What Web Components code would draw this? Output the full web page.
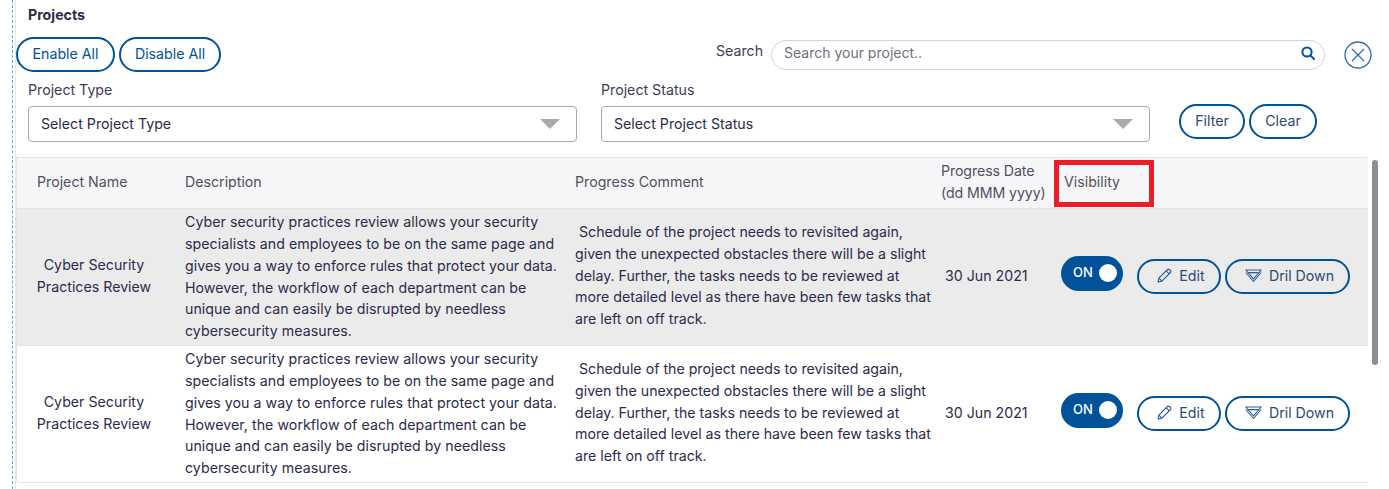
<!DOCTYPE html>
<html lang="en">
<head>
<meta charset="utf-8">
<title>Projects</title>
<style>
  html, body { margin: 0; height: 489px; overflow: hidden; background: #fff; }
  body { font-family: Inter, "Liberation Sans", sans-serif; font-size: 14.2px; color: #2b2b4b; }
</style>
</head>
<body>
<projects-page></projects-page>

<script>
class PillButton extends HTMLElement {
  constructor() {
    super();
    this.attachShadow({ mode: 'open' });
    this.shadowRoot.innerHTML = `
      <style>
        :host { display: inline-block; }
        button {
            display: flex;
            align-items: center;
            justify-content: center;
            gap: var(--pill-gap, 8px);
            box-sizing: border-box;
            height: var(--pill-height, 35px);
            width: var(--pill-width, auto);
            padding: 0 0 2px var(--pill-left, 0);
            background: transparent;
            border: 2px solid #00529b;
            border-radius: 18px;
            font: inherit;
            color: var(--pill-color, #2b4a78);
        }
        ::slotted(svg) { display: block; }
      </style>
      <button><slot name="icon"></slot><slot></slot></button>
    `;
  }
}

class SelectBox extends HTMLElement {
  constructor() {
    super();
    this.attachShadow({ mode: 'open' });
    this.shadowRoot.innerHTML = `
      <style>
        :host { display: block; width: 549px; }
        label { display: block; height: 26px; line-height: 20px; color: #3c3c58; }
        #box {
            box-sizing: border-box;
            height: 36px;
            display: flex;
            align-items: center;
            justify-content: space-between;
            padding: 0 16px 0 12px;
            border: 1px solid #aaa;
            border-radius: 4px;
        }
        span { margin-top: -2px; }
        #arrow {
            width: 0;
            height: 0;
            border-left: 10px solid transparent;
            border-right: 10px solid transparent;
            border-top: 10px solid #aaa;
        }
      </style>
      <label>${this.getAttribute('label')}</label>
      <div id="box"><span>${this.getAttribute('placeholder')}</span><div id="arrow"></div></div>
    `;
  }
}

class SearchBox extends HTMLElement {
  constructor() {
    super();
    this.attachShadow({ mode: 'open' });
    this.shadowRoot.innerHTML = `
      <style>
        :host { display: flex; align-items: center; }
        label { width: 55px; margin-top: -10px; color: #3c3c58; }
        #box {
            box-sizing: border-box;
            width: 554px;
            height: 30px;
            display: flex;
            align-items: center;
            justify-content: space-between;
            padding: 0 9px 5px 12px;
            border: 1px solid #c9d6e0;
            border-radius: 15px;
            color: #6f6f7f;
            font-size: 14px;
        }
      </style>
      <label>Search</label>
      <div id="box">
        <span>Search your project..</span>
        <svg width="14" height="14" viewBox="0 0 14 14" fill="none" stroke="#00529b" stroke-width="2">
          <circle cx="6" cy="6" r="4.6"/><path d="M9.4 9.4L13 13" stroke-linecap="round"/>
        </svg>
      </div>
    `;
  }
}

class ToggleSwitch extends HTMLElement {
  constructor() {
    super();
    this.attachShadow({ mode: 'open' });
    this.shadowRoot.innerHTML = `
      <style>
        :host {
            display: flex;
            align-items: center;
            box-sizing: border-box;
            width: 62px;
            height: 35px;
            margin-bottom: 7px;
            padding: 0 6px 2px 12px;
            justify-content: space-between;
            background: #00529b;
            border-radius: 18px;
            color: #fff;
            font-size: 13px;
            font-weight: 500;
        }
        i { width: 18px; height: 18px; border-radius: 50%; background: #fff; }
      </style>
      <span>ON</span><i></i>
    `;
  }
}

class ProjectRow extends HTMLElement {
  constructor() {
    super();
    this.attachShadow({ mode: 'open' });
    this.shadowRoot.innerHTML = `
      <style>
        :host {
            display: grid;
            grid-template-columns: 158px 390px 366px 123px 1fr;
            height: 137px;
            box-sizing: border-box;
            border-bottom: 1px solid #e3e3e3;
            line-height: 21.75px;
        }
        :host([highlight]) { background: #ebebeb; }
        div { display: flex; align-items: center; padding-left: 10px; }
        #name { justify-content: center; text-align: center; padding: 0 4px 2px 0; }
        #date { padding-left: 14px; padding-bottom: 2px; }
        #desc { padding-bottom: 1px; letter-spacing: .04px; }
        #comment { padding-bottom: 3px; }
        #actions { padding-left: 7px; gap: 14px; }
        #btns { padding: 0 0 1px; gap: 4px; }
        pill-button { --pill-gap: 7px; --pill-left: 4px; }
        .edit { --pill-width: 84px; }
        .drill { --pill-width: 125px; }
      </style>
      <div id="name"><slot name="name"></slot></div>
      <div id="desc"><slot name="desc"></slot></div>
      <div id="comment"><slot name="comment"></slot></div>
      <div id="date"><slot name="date"></slot></div>
      <div id="actions">
        <toggle-switch></toggle-switch>
        <div id="btns">
          <pill-button class="edit">
            <svg slot="icon" width="15" height="15" viewBox="0 0 15 15" fill="none" stroke="#2b5c9a" stroke-width="1.1" stroke-linejoin="round">
              <path d="M1 14l.9-3.900L10.500 1.500a1.400 1.400 0 0 1 2 0l1 1a1.400 1.400 0 0 1 0 2L4.900 13.100z"/><path d="M9.200 2.800l3 3M1.900 10.100l3 3"/>
            </svg>
            Edit
          </pill-button>
          <pill-button class="drill">
            <svg slot="icon" width="17" height="13" viewBox="0 0 17 13" fill="none" stroke="#2b5c9a" stroke-width="1.1" stroke-linejoin="round">
              <path d="M.8 1h15.400L8.500 9.800z"/><path d="M3.400 3.600h10.200M.8 3.500L8.500 12.500 16.200 3.500"/>
            </svg>
            Dril Down
          </pill-button>
        </div>
      </div>
    `;
  }
}

class ProjectTable extends HTMLElement {
  constructor() {
    super();
    this.attachShadow({ mode: 'open' });
    this.shadowRoot.innerHTML = `
      <style>
        :host { display: block; position: relative; width: 1351px; box-shadow: -1px -1px 0 #e3e3e3; }
        header {
            display: grid;
            grid-template-columns: 158px 390px 366px 123px 1fr;
            align-items: center;
            height: 51px;
            box-sizing: border-box;
            padding-bottom: 2px;
            background: #f6f6f9;
            border-bottom: 1px solid #e3e3e3;
            color: #50505f;
            line-height: 21.75px;
        }
        header span { padding-left: 10px; }
        header span:first-child { padding-left: 20px; }
        #date-head { letter-spacing: -.1px; }
        #mark {
            position: absolute;
            left: 1037px;
            top: 2px;
            width: 100px;
            height: 47px;
            box-sizing: border-box;
            border: 5px solid #ee1c25;
        }
      </style>
      <header>
        <span>Project Name</span>
        <span>Description</span>
        <span>Progress Comment</span>
        <span id="date-head">Progress Date<br>(dd MMM yyyy)</span>
        <span>Visibility</span>
      </header>
      <slot></slot>
      <div id="mark"></div>
    `;
  }
}

const DESC = 'Cyber security practices review allows your security specialists and employees to be on the same page and gives you a way to enforce rules that protect your data. However, the workflow of each department can be unique and can easily be disrupted by needless cybersecurity measures.';
const COMMENT = '&nbsp;Schedule of the project needs to revisited again, given the unexpected obstacles there will be a slight delay. Further, the tasks needs to be reviewed at more detailed level as there have been few tasks that are left on off track.';

class ProjectsPage extends HTMLElement {
  constructor() {
    super();
    this.attachShadow({ mode: 'open' });
    const row = (attr) => `
      <project-row ${attr}>
        <span slot="name">Cyber Security<br>Practices Review</span>
        <span slot="desc">${DESC}</span>
        <span slot="comment">${COMMENT}</span>
        <span slot="date">30 Jun 2021</span>
      </project-row>`;
    this.shadowRoot.innerHTML = `
      <style>
        :host {
            display: block;
            position: relative;
            height: 489px;
            box-sizing: border-box;
            margin-left: 12px;
            padding-left: 2px;
            border-left: 1px dashed #5aa9e6;
        }
        #inner { height: 489px; box-sizing: border-box; padding-left: 1px; border-left: 1px solid #e8e8e8; overflow: hidden; }
        h1 { margin: 0 0 0 11px; padding-top: 6px; height: 37px; box-sizing: border-box; font-size: 14.2px; font-weight: 700; line-height: 18px; color: #2b2b4b; }
        #top { display: flex; align-items: flex-start; height: 43px; margin-left: -1px; }
        #bulk { display: flex; gap: 4px; }
        #bulk pill-button { --pill-color: #00529b; }
        search-box { margin: 3px 0 0 495px; }
        #close { margin: 4px 0 0 19px; display: block; }
        #filters { display: flex; align-items: flex-start; height: 78px; margin-left: 11px; gap: 24px; }
        #filter-btns { display: flex; gap: 4px; margin: 24px 0 0 5px; }
        #scroll {
            position: absolute;
            left: 1359px;
            top: 160px;
            width: 6px;
            height: 205px;
            border-radius: 3px;
            background: #8e8e8e;
        }
      </style>
      <div id="inner">
        <h1>Projects</h1>
        <div id="top">
          <div id="bulk">
            <pill-button style="--pill-width:99px">Enable All</pill-button>
            <pill-button style="--pill-width:102px">Disable All</pill-button>
          </div>
          <search-box></search-box>
          <svg id="close" width="28" height="28" viewBox="0 0 28 28" fill="none" stroke="#2e6ca4" stroke-width="1.3">
            <circle cx="14" cy="14" r="13"/><path d="M8 8l12 12M20 8L8 20"/>
          </svg>
        </div>
        <div id="filters">
          <select-box label="Project Type" placeholder="Select Project Type"></select-box>
          <select-box label="Project Status" placeholder="Select Project Status"></select-box>
          <div id="filter-btns">
            <pill-button style="--pill-width:66px">Filter</pill-button>
            <pill-button style="--pill-width:68px">Clear</pill-button>
          </div>
        </div>
        <project-table>
          ${row('highlight')}
          ${row('')}
        </project-table>
      </div>
      <div id="scroll"></div>
    `;
  }
}

customElements.define('pill-button', PillButton);
customElements.define('select-box', SelectBox);
customElements.define('search-box', SearchBox);
customElements.define('toggle-switch', ToggleSwitch);
customElements.define('project-row', ProjectRow);
customElements.define('project-table', ProjectTable);
customElements.define('projects-page', ProjectsPage);
</script>
</body>
</html>
